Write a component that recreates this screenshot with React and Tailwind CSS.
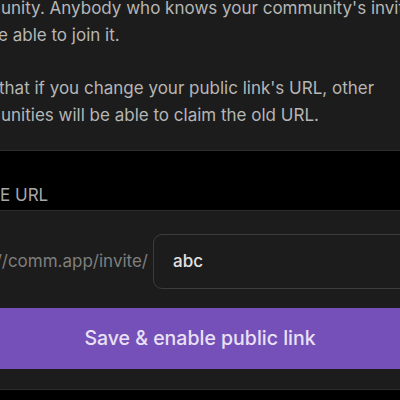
function Line({ pre, rest, offset, className = "" }) {
  return (
    <div className={"flex whitespace-nowrap " + className} style={{ marginLeft: offset - 80 }}>
      <div className="shrink-0 w-[80px] flex justify-end">
        <span className="whitespace-pre">{pre}</span>
      </div>
      <span>{rest}</span>
    </div>
  );
}

export default function App() {
  return (
    <div
      className="w-[400px] h-[400px] overflow-hidden bg-[#1c1c1c] flex flex-col"
      style={{ fontFamily: "Inter, 'Noto Sans', sans-serif" }}
    >
      <div className="shrink-0 border-b border-[#2e2e2e] pb-[21px] mt-[-5px] text-[17px] leading-[27px] text-[#b6b6b6] mr-[-200px]">
        <Line pre="comm" rest="unity. Anybody who knows your community's invite link" offset={1} />
        <Line pre={"will\u00a0b"} rest="e able to join it." offset={-2} />
        <Line pre={"Note\u00a0"} rest="that if you change your public link's URL, other" offset={-1} className="mt-[26px]" />
        <Line pre="comm" rest="unities will be able to claim the old URL." offset={1} />
      </div>
      <div className="shrink-0 h-[59px] bg-black flex items-end pb-[5px] text-[17px] leading-[20px] text-[#a8a8a8] whitespace-nowrap">
        <Line pre="INVIT" rest="E URL" offset={0} />
      </div>
      <div className="shrink-0 border-t border-b border-[#2e2e2e] bg-[#1c1c1c] pt-[23px] pb-[20px]">
        <div className="flex items-center">
          <div className="w-[148px] shrink-0 flex justify-end whitespace-nowrap text-[17px] text-[#7f7f7f]">
            https://comm.app/invite/
          </div>
          <div className="ml-[5px] w-[320px] shrink-0 h-[55px] rounded-[9px] border-[1.5px] border-[#3c3c3c] flex items-center pl-[19px] text-[17px] text-[#e2e2e2] font-medium">
            abc
          </div>
        </div>
        <div className="mt-[19px] h-[61px] bg-[#7550b9] flex items-center justify-center text-[19.5px] text-[#e9e1f6] font-medium">
          Save &amp; enable public link
        </div>
      </div>
      <div className="flex-1 bg-black" />
    </div>
  );
}
